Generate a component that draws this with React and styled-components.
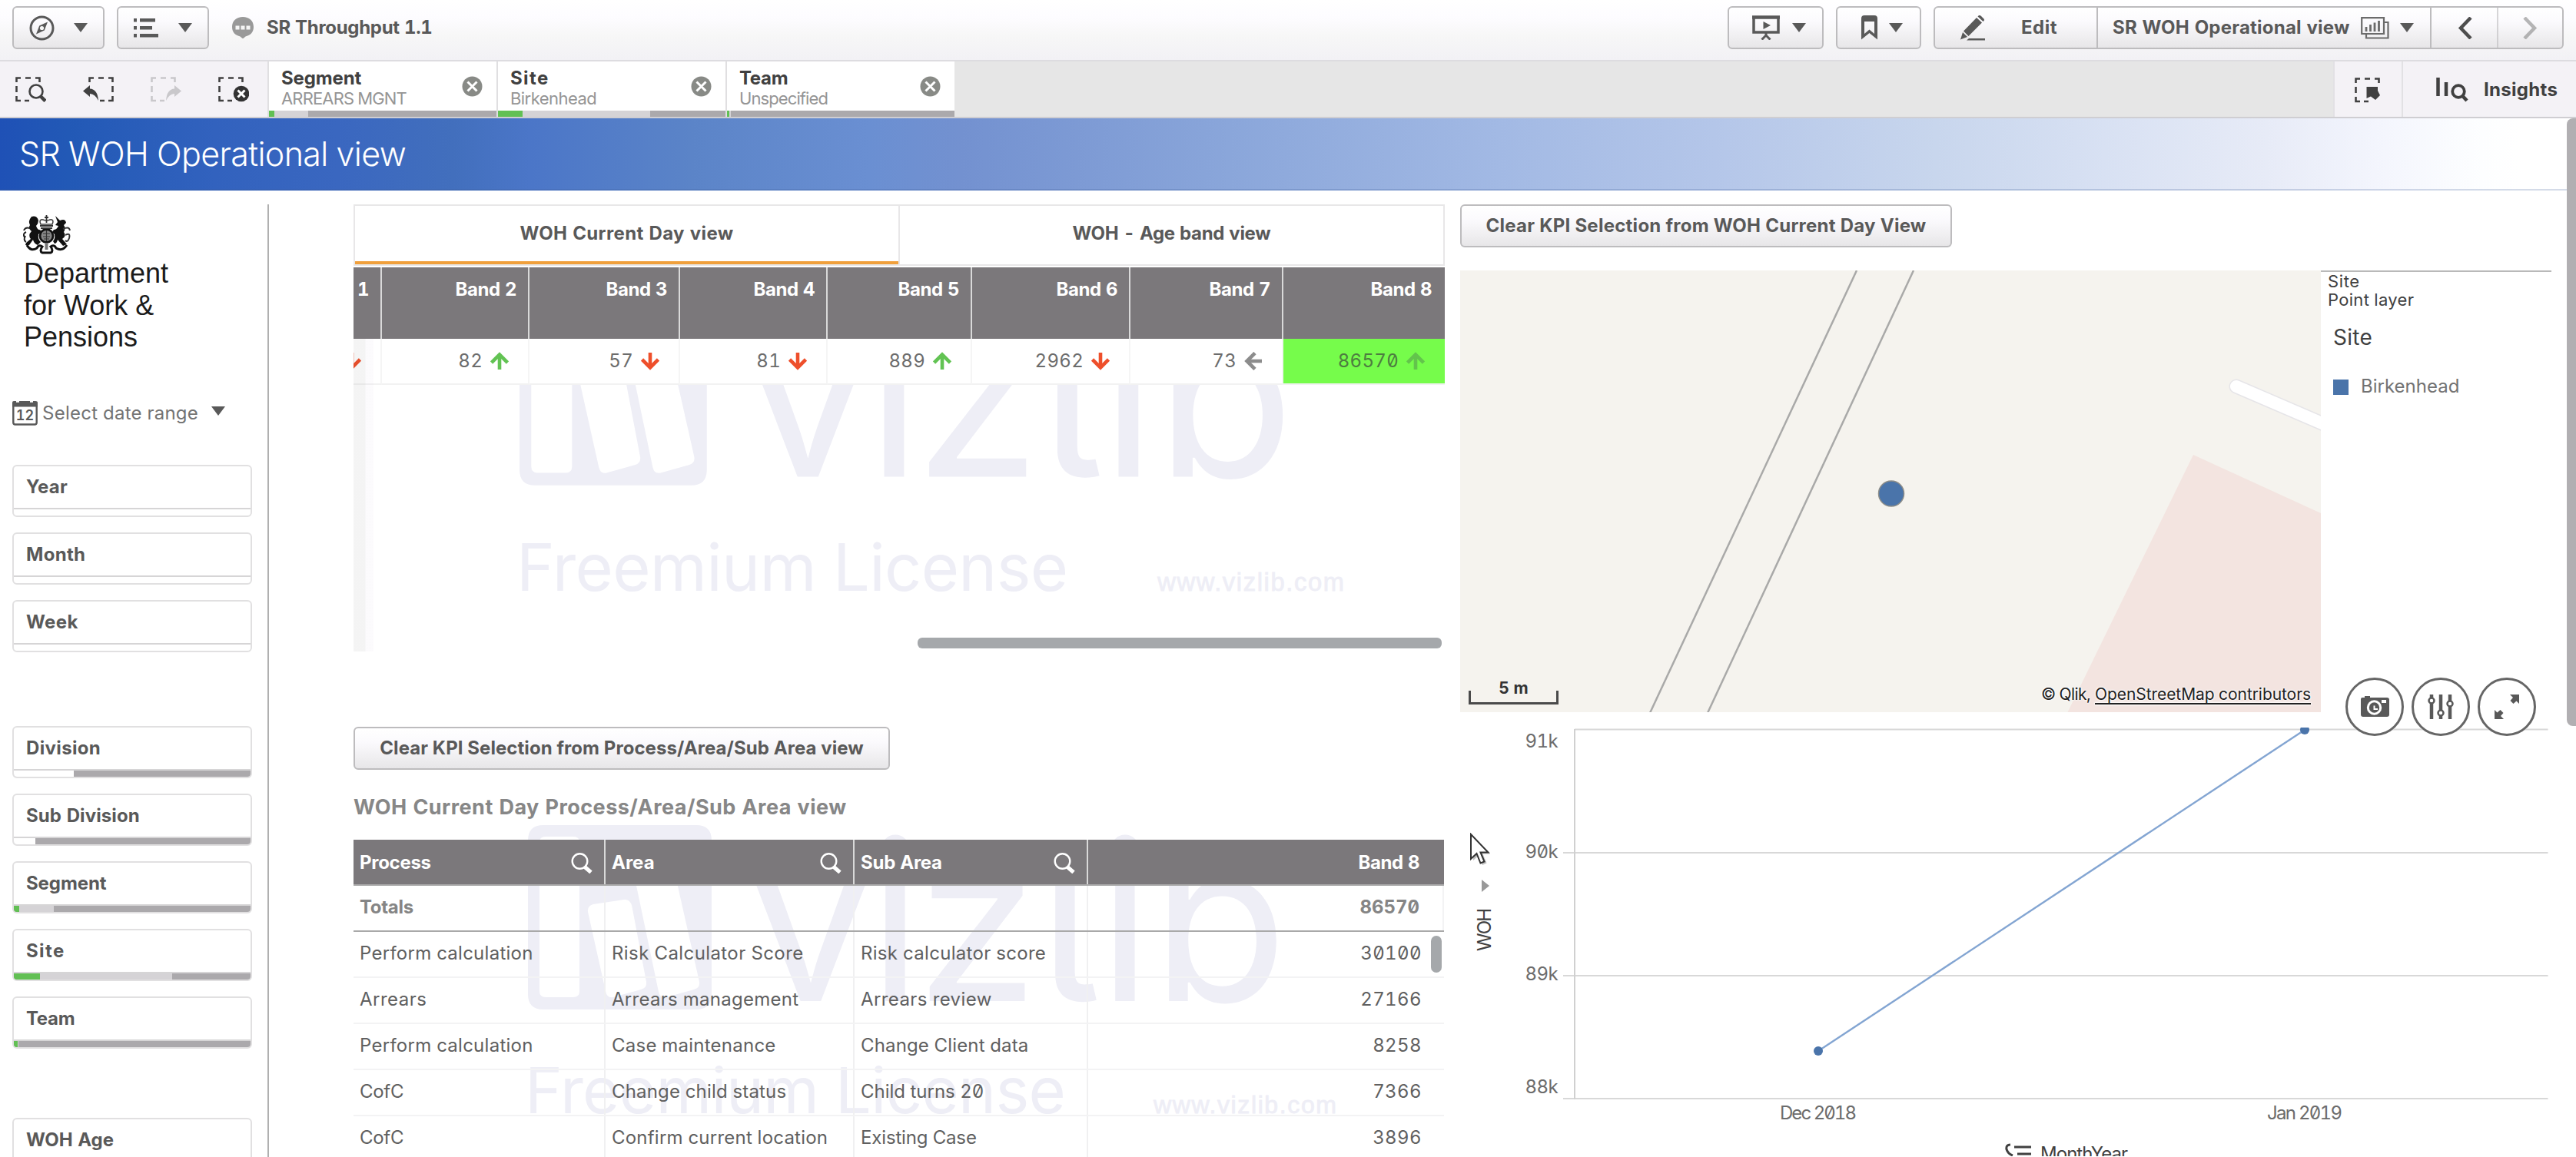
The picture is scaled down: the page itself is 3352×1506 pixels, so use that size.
import React from 'react';
import styled, { createGlobalStyle, css } from 'styled-components';

const GlobalStyle = createGlobalStyle`
  *, *::before, *::after { box-sizing: border-box; }
  html, body { margin: 0; padding: 0; background: #fff; }
  body {
    font-family: Inter, "Liberation Sans", sans-serif;
    font-size: 24px;
    line-height: 30px;
    color: #595959;
    font-feature-settings: "zero" 1, "tnum" 1;
    overflow: hidden;
  }
  svg { display: block; flex: none; }
`;

const Page = styled.div`
  width: 3352px;
  height: 1506px;
  display: flex;
  flex-direction: column;
  overflow: hidden;
  background: #fff;
`;

const Text = styled.span`
  display: block;
  white-space: nowrap;
  font-weight: ${(p) => (p.$bold ? 700 : p.$light ? 300 : 400)};
  font-size: ${(p) => p.$size || 24}px;
  letter-spacing: ${(p) => p.$ls || 0}px;
  color: ${(p) => p.$color || 'inherit'};
`;

/* ---------- top bar ---------- */

const TopBar = styled.header`
  flex: none;
  height: 80px;
  display: flex;
  align-items: flex-start;
  padding: 8px 16px 0;
  background: linear-gradient(#fff 0%, #fdfcff 30%, #f7f7f7 60%, #f2f1f5 100%);
  border-bottom: 2px solid #dddce0;
`;

const buttonFace = css`
  height: 56px;
  border: 2px solid #bdbcbe;
  border-radius: 6px;
  background: linear-gradient(#fff 0%, #fbfafd 35%, #efeef0 75%, #e7e6e8 100%);
`;

const ToolButton = styled.button`
  ${buttonFace}
  width: ${(p) => p.$w}px;
  margin: 0 ${(p) => p.$mr || 0}px 0 0;
  padding: 0 0 0 ${(p) => p.$pl || 0}px;
  display: flex;
  align-items: center;
  justify-content: center;
  gap: ${(p) => p.$gap || 0}px;
  color: #595959;
`;

const AppTitle = styled.div`
  height: 55px;
  flex: 1;
  display: flex;
  align-items: center;
  gap: 17px;
  padding-left: 30px;
`;

const ButtonGroup = styled.div`
  ${buttonFace}
  width: 820px;
  display: flex;
`;

const GroupItem = styled.div`
  width: ${(p) => p.$w}px;
  display: flex;
  align-items: center;
  padding-left: ${(p) => p.$pl || 0}px;
  gap: ${(p) => p.$gap || 0}px;
  border-left: ${(p) => (p.$first ? 'none' : '2px solid #bdbcbe')};
  opacity: ${(p) => (p.$dim ? 0.6 : 1)};
`;

/* ---------- selection bar ---------- */

const SelectionBar = styled.div`
  flex: none;
  height: 74px;
  display: flex;
  background: #e6e6e6;
  border-bottom: 2px solid #cfced2;
`;

const SelectionTools = styled.div`
  width: 348px;
  display: flex;
  align-items: center;
  padding: 1px 0 0 20px;
  gap: 48px;
  background: #f4f2f6;
`;

const Chip = styled.div`
  width: 298px;
  display: flex;
  flex-direction: column;
  background: #fff;
  border-left: 2px solid #e0dfe1;
`;

const ChipBody = styled.div`
  height: 64px;
  display: flex;
  align-items: center;
  justify-content: space-between;
  padding: 0 18px 0 16px;
`;

const ChipText = styled.div`
  display: flex;
  flex-direction: column;
  padding-top: 5px;
  & > :first-child { line-height: 27px; }
  & > :last-child { line-height: 26px; }
`;

const Bar = styled.div`
  height: ${(p) => p.$h || 8}px;
  display: flex;
  background: #aba9ac;
`;

const BarPart = styled.span`
  width: ${(p) => p.$w}px;
  background: ${(p) => p.$c};
`;

const Spacer = styled.div`
  flex: 1;
`;

const SelectionAction = styled.div`
  width: ${(p) => p.$w}px;
  display: flex;
  align-items: center;
  gap: 20px;
  padding: 2px 0 0 ${(p) => p.$pl}px;
  background: #f4f2f6;
  border-left: 2px solid #e2e1e4;
`;

/* ---------- sheet ---------- */

const Body = styled.div`
  flex: 1;
  min-height: 0;
  display: flex;
`;

const Sheet = styled.main`
  width: 3340px;
  display: flex;
  flex-direction: column;
`;

const ScrollTrack = styled.div`
  width: 12px;
`;

const ScrollThumb = styled.div`
  height: 791px;
  background: #b1afb2;
  border-radius: 8px 0 0 8px;
`;

const SheetTitle = styled.div`
  flex: none;
  height: 94px;
  display: flex;
  align-items: center;
  padding: 0 0 0 25px;
  color: #fff;
  border-bottom: 2px solid rgba(60, 90, 150, 0.22);
  background: linear-gradient(90deg, #1f51b6 0px, #2259b6 90px, #3262be 280px, #3a67c0 440px, #426fbd 590px, #4b76c8 690px, #5b84c8 900px, #6a8fd2 1130px, #7391d0 1250px, #8aa6da 1600px, #a2b9e4 1950px, #b4c6e9 2230px, #c8d6ed 2520px, #d8e1f3 2740px, #e7ebf7 2950px, #f3f5fd 3090px, #fdfeff 3230px, #ffffff 3280px);
`;

const Columns = styled.div`
  flex: 1;
  min-height: 0;
  display: flex;
  padding-top: 18px;
`;

const Sidebar = styled.aside`
  width: 350px;
  padding: 14px 0 0 16px;
  display: flex;
  flex-direction: column;
  border-right: 2px solid #b0b0b0;
  overflow: hidden;
`;

const Department = styled.div`
  font-family: "Liberation Sans", Arial, sans-serif;
  font-size: 36px;
  line-height: 41.6px;
  color: #1b1b1b;
  width: 200px;
  margin: 4px 0 0 15px;
`;

const Crest = styled.div`
  margin-left: 14px;
`;

const DateRange = styled.div`
  flex: none;
  height: 34px;
  margin: 61px 0 0;
  display: flex;
  align-items: center;
  color: #737373;
  & > span { margin: 0 17px 0 6px; }
  & > svg:last-child { margin-top: -6px; }
`;

const FilterGroup = styled.div`
  flex: none;
  display: flex;
  flex-direction: column;
  gap: 20px;
  margin-top: ${(p) => p.$mt}px;
`;

const FilterBox = styled.div`
  width: 312px;
  height: 68px;
  border: 2px solid #e1e0e1;
  border-radius: 6px;
  overflow: hidden;
  display: flex;
  flex-direction: column;
`;

const FilterLabel = styled.div`
  height: 56px;
  padding: 12px 0 0 16px;
  border-bottom: 2px solid #d6d5d6;
`;

/* ---------- center column ---------- */

const Center = styled.section`
  width: 1420px;
  margin-left: 110px;
  display: flex;
  flex-direction: column;
`;

const Tabs = styled.div`
  flex: none;
  height: 80px;
  display: flex;
  border: 2px solid #e8e7e8;
`;

const Tab = styled.div`
  width: ${(p) => p.$w}px;
  display: flex;
  align-items: center;
  justify-content: center;
  padding-bottom: ${(p) => (p.$active ? 0 : 4)}px;
  border-left: ${(p) => (p.$active ? 'none' : '2px solid #e8e7e8')};
  border-bottom: ${(p) => (p.$active ? '4px solid #f0a03c' : 'none')};
`;

const BandPanel = styled.div`
  flex: none;
  position: relative;
  height: 500px;
  margin-top: 2px;
  overflow: hidden;
`;

const BandHead = styled.div`
  position: relative;
  height: 93px;
  width: 1419px;
  display: flex;
  background: #7b787b;
`;

const BandHeadCell = styled.div`
  flex: none;
  width: ${(p) => p.$w}px;
  padding: 14px 15px 0 0;
  text-align: right;
  color: #fff;
  border-right: 2px solid #d9d9d9;
  &:last-child { border-right-color: #7b787b; }
`;

const BandRow = styled.div`
  position: relative;
  height: 60px;
  display: flex;
  background: #fff;
`;

const BandCell = styled.div`
  flex: none;
  width: ${(p) => p.$w}px;
  display: flex;
  align-items: center;
  justify-content: flex-end;
  gap: 10px;
  padding-right: ${(p) => (p.$hot ? 26 : 25)}px;
  color: ${(p) => (p.$hot ? '#4d7d40' : '#6c6c6c')};
  background: ${(p) => (p.$hot ? '#76fc4b' : 'transparent')};
  border-right: ${(p) => (p.$hot ? 'none' : '2px solid #f5f5f5')};
  border-bottom: 2px solid #f2f2f2;
`;

const WatermarkLayer = styled.div`
  position: absolute;
  left: ${(p) => p.$x}px;
  top: ${(p) => p.$y}px;
`;

const EdgeShade = styled.div`
  position: absolute;
  left: 0;
  top: 93px;
  width: 26px;
  height: 407px;
  background: linear-gradient(90deg, rgba(70, 70, 70, 0.06) 0 15px, rgba(90, 40, 140, 0.02) 16px 26px);
`;

const HorizontalThumb = styled.div`
  position: absolute;
  left: 734px;
  top: 482px;
  width: 682px;
  height: 14px;
  border-radius: 6px;
  background: #a5a8ab;
`;

const ActionButton = styled.button`
  ${buttonFace}
  flex: none;
  width: ${(p) => p.$w}px;
  margin: ${(p) => p.$mt || 0}px 0 0;
  padding: 0 0 2px;
  display: flex;
  align-items: center;
  justify-content: center;
  font-family: inherit;
  color: #595959;
`;

const ProcessPanel = styled.div`
  flex: 1;
  position: relative;
  min-height: 0;
  overflow: hidden;
  display: flex;
  flex-direction: column;
`;

const PanelTitle = styled.div`
  flex: none;
  position: relative;
  height: 91px;
  padding-top: 34px;
`;

const GridRow = styled.div`
  flex: none;
  position: relative;
  display: grid;
  grid-template-columns: 328px 324px 304px 463px;
  width: 1419px;
  height: 60px;
  color: #606060;
  border-bottom: 2px solid #f3f3f4;

  ${(p) => p.$head && css`
    color: #fff;
    background: #7b787b;
    border-bottom-color: #aaa;
  `}
  ${(p) => p.$total && css`
    color: #858585;
    border-bottom-color: #a9a9a9;
  `}
`;

const GridCell = styled.div`
  display: flex;
  align-items: center;
  justify-content: space-between;
  padding: ${(p) => (p.$head ? 2 : 0)}px 15px ${(p) => (p.$head ? 0 : 2)}px 8px;
  border-right: 2px solid ${(p) => (p.$head ? '#d9d9d9' : '#f0f0f1')};
  &:last-child {
    justify-content: flex-end;
    padding-right: ${(p) => (p.$body ? 27 : 30)}px;
    border-right-color: ${(p) => (p.$head ? '#7b787b' : p.$body ? 'transparent' : '#f3f3f4')};
  }
`;

const RowThumb = styled.div`
  position: absolute;
  left: 1402px;
  top: 216px;
  width: 14px;
  height: 48px;
  border-radius: 7px;
  background: #a5a8ab;
`;

/* ---------- right column ---------- */

const Right = styled.section`
  position: relative;
  width: 1420px;
  margin-left: 20px;
  display: flex;
  flex-direction: column;
`;

const MapRow = styled.div`
  flex: none;
  height: 575px;
  margin-top: 30px;
  display: flex;
`;

const MapBox = styled.div`
  position: relative;
  width: 1120px;
  height: 575px;
  overflow: hidden;
`;

const MapScale = styled.div`
  position: absolute;
  left: 11px;
  bottom: 10px;
  width: 117px;
  height: 18px;
  border: 3px solid #4a4a4a;
  border-top: none;
  display: flex;
  justify-content: center;
  color: #333;
  & > span { margin-top: -15px; line-height: 24px; }
`;

const Attribution = styled.div`
  position: absolute;
  right: 13px;
  bottom: 9px;
  display: flex;
  gap: 6px;
  color: #222;
  line-height: 28px;
  text-shadow: 0 0 3px #fff, 0 0 3px #fff, 0 0 2px #fff;
`;

const Underlined = styled(Text)`
  text-decoration: underline;
  text-decoration-thickness: 2px;
  text-underline-offset: 4px;
  text-decoration-skip-ink: none;
`;

const Legend = styled.div`
  width: 300px;
  border-top: 2px solid #b9b9b9;
  padding: 0 0 0 9px;
  color: #404040;
  & > span { line-height: 24px; }
`;

const LegendHeading = styled.div`
  margin: 19px 0 0 7px;
  line-height: 36px;
`;

const LegendItem = styled.div`
  display: flex;
  align-items: center;
  gap: 16px;
  margin: 31px 0 0 7px;
  color: #737373;
`;

const Swatch = styled.span`
  width: 20px;
  height: 20px;
  margin-top: 2px;
  background: #4a74aa;
`;

const RoundButtons = styled.div`
  position: absolute;
  left: 1152px;
  top: 616px;
  display: flex;
  gap: 10px;
`;

const RoundButton = styled.div`
  width: 76px;
  height: 76px;
  border-radius: 50%;
  border: 3px solid #666;
  background: #fff;
  display: flex;
  align-items: center;
  justify-content: center;
`;

const Cursor = styled.div`
  position: absolute;
  left: 12px;
  top: 818px;
`;

/* ---------- icons ---------- */

const Triangle = ({ w = 18, h = 12 }) => (
  <svg width={w} height={h} viewBox="0 0 18 12"><path d="M0 0H18L9 12Z" fill="#595959" /></svg>
);

const Compass = () => (
  <svg width="33" height="33" viewBox="0 0 33 33">
    <circle cx="16.5" cy="16.5" r="14.5" fill="none" stroke="#595959" strokeWidth="3" />
    <path d="M24 8.5L19.8 19.6L9 24.5L13.2 13.4Z" fill="#595959" />
    <circle cx="16.5" cy="16.5" r="2.6" fill="#f6f6f6" />
  </svg>
);

const ListIcon = () => (
  <svg width="33" height="25" viewBox="0 0 33 25" fill="#595959">
    <path d="M0 0h4v4.500H0zM8 0h20v4.500H8zM0 10h4v4.500H0zM8 10h16v4.500H8zM0 20h4v4.500H0zM8 20h24v4.500H8z" />
  </svg>
);

const Speech = () => (
  <svg width="28" height="28" viewBox="0 0 28 28">
    <path d="M14 0c8 0 14 5 14 13s-5 11-10.500 12.500L14 28.500L10.500 25.500C5 24 0 21 0 13S6 0 14 0z" fill="#999" />
    <path d="M4.500 11.500h5v5h-5zM11.500 11.500h5v5h-5zM18.500 11.500h5v5h-5z" fill="#f5f5f5" />
  </svg>
);

const Present = () => (
  <svg width="36" height="32" viewBox="0 0 36 32" fill="none" stroke="#595959">
    <path d="M0 2.500H36" strokeWidth="4.500" />
    <path d="M2 4V22H34V4" strokeWidth="3.500" />
    <path d="M18 23V27M12.500 31.500L18 26L23.500 31.500" strokeWidth="3" />
    <path d="M14.500 8L24 13L14.500 18Z" fill="#595959" stroke="none" />
  </svg>
);

const Bookmark = () => (
  <svg width="21" height="32" viewBox="0 0 21 32">
    <path d="M0 31.500V4Q0 0 4 0H17Q21 0 21 4V31.500L10.500 23Z M4 8V24L10.500 18.500L17 24V8Z" fill="#595959" fillRule="evenodd" />
  </svg>
);

const Pencil = () => (
  <svg width="34" height="33" viewBox="0 0 34 33" fill="#595959">
    <path d="M22 3L29 9.500L11.500 27L5 20.500ZM23.500 1.500L25 0Q26.500 -.5 28 1L31.500 4.500Q32.500 6 31.500 7L30.500 8ZM4 22L10 28L1 31.500ZM12 30H33V32.500H9Z" />
  </svg>
);

const SheetIcon = () => (
  <svg width="37" height="29" viewBox="0 0 37 29" fill="none" stroke="#6b6b6b" strokeWidth="2.200">
    <path d="M1.200 1.200H30V22H1.200ZM30 7H35.500V27.500H7V22" />
    <path d="M7 13V19M12.500 10V19M18 7.500V19M23.500 5V19" strokeWidth="2.800" />
  </svg>
);

const Chevron = ({ flip }) => (
  <svg width="19" height="29" viewBox="0 0 19 29" fill="none" stroke={flip ? '#888' : '#4d4d4d'} strokeWidth="4.500">
    <path d={flip ? 'M2 1L15 14.500L2 28' : 'M17 1L4 14.500L17 28'} />
  </svg>
);

const corner = 'M1.500 7V1.500H7M13 1.500H20M26 1.500H31.500V7M1.500 12V20M1.500 25V31H7M12 31H18';

const SelectSearch = () => (
  <svg width="40" height="33" viewBox="0 0 40 33" fill="none" stroke="#404040" strokeWidth="2.600">
    <path d={corner} />
    <circle cx="27" cy="19" r="8.500" />
    <path d="M32.500 25L39 31.500" strokeWidth="4.500" />
  </svg>
);

const StepBack = () => (
  <svg width="40" height="33" viewBox="0 0 40 33" fill="none" stroke="#404040" strokeWidth="2.600">
    <path d="M8.500 7V1.500H14M20 1.500H27M33 1.500H38.500V7M38.500 12V20M38.500 25V31H33M28 31H22" />
    <path d="M0 18.500L9 11V15.500Q19 16 20 31Q16 22.500 9 22V26Z" fill="#404040" stroke="none" />
  </svg>
);

const StepForward = () => (
  <svg width="40" height="33" viewBox="0 0 40 33" fill="none" stroke="#c9c8cb" strokeWidth="2.600">
    <path d="M31.500 7V1.500H26M20 1.500H13M7 1.500H1.500V7M1.500 12V20M1.500 25V31H7M12 31H18" />
    <path d="M40 18.500L31 11V15.500Q21 16 20 31Q24 22.500 31 22V26Z" fill="#c9c8cb" stroke="none" />
  </svg>
);

const ClearAll = () => (
  <svg width="40" height="33" viewBox="0 0 40 33" fill="none" stroke="#404040" strokeWidth="2.600">
    <path d={corner} />
    <circle cx="30" cy="22" r="10.300" fill="#333" stroke="none" />
    <path d="M25.500 17.500L34.500 26.500M34.500 17.500L25.500 26.500" stroke="#fff" strokeWidth="3" />
  </svg>
);

const SelectTool = () => (
  <svg width="34" height="33" viewBox="0 0 34 33" fill="none" stroke="#404040" strokeWidth="2.600">
    <path d={corner} />
    <path d="M15.500 12H30V17L33 23L27 29L21 24.500L15.500 27Z" fill="#404040" stroke="none" />
  </svg>
);

const InsightsIcon = () => (
  <svg width="42" height="32" viewBox="0 0 42 32" fill="none" stroke="#404040" strokeWidth="4.500">
    <path d="M2.500 0V24M13 6V24" />
    <circle cx="29" cy="18" r="7.800" strokeWidth="3.800" />
    <path d="M34 23.500L40 30" />
  </svg>
);

const ClearIcon = () => (
  <svg width="27" height="27" viewBox="0 0 27 27">
    <circle cx="13.500" cy="13.500" r="13" fill="#888a86" />
    <path d="M7.500 7.500L19.500 19.500M19.500 7.500L7.500 19.500" stroke="#fff" strokeWidth="3" />
  </svg>
);

const Calendar = () => (
  <svg width="33" height="33" viewBox="0 0 33 33">
    <rect x="1.300" y="4" width="30.400" height="27.500" rx="2.500" fill="#fff" stroke="#595959" strokeWidth="2.400" />
    <path d="M0 8.500V3Q0 1 2 1H5V4H9V1H23V4H27V1H30Q33 1 33 3V8.500Z" fill="#595959" />
    <text x="16.500" y="26" textAnchor="middle" fontSize="18" fontWeight="600" fill="#595959" fontFamily="Inter, sans-serif">12</text>
  </svg>
);

const CrestIcon = () => (
  <svg width="62" height="51" viewBox="0 0 62 51" fill="#111">
    <circle cx="30.500" cy="27" r="8.500" fill="#888" stroke="#111" strokeWidth="2.800" />
    <path d="M26 24h9M26 28h9M30.500 20v14M27 31h7" stroke="#333" strokeWidth="1.200" />
    <path d="M23 12Q20 5 26 6Q30.500 8 35 6Q41 5 38 12Z" fill="none" stroke="#444" strokeWidth="1.600" />
    <path d="M30.500 0V10M28 3H33M22 14H39M23 17H38" stroke="#333" strokeWidth="1.800" />
    <path d="M11 2Q18 0 20 7Q20 11 17 14Q19 20 22 19L24 22L20 25Q19 32 23 35L19 39Q14 37 13 32L8 39H3L4 36L10 31Q6 26 11 21Q6 17 9 13Q6 8 11 2Z" />
    <path d="M2 29Q-1 24 4 22M1 20Q3 15 9 17M4 35Q0 33 3 27" fill="none" stroke="#222" strokeWidth="2" />
    <path d="M42 1L48 7Q55 4 56 10L53 13Q56 17 53 22Q57 27 51 31L57 38L52 40L45 32Q44 37 41 37L39 34Q42 31 41 25L38 22L40 19Q44 19 46 14L42 13L45 9Z" />
    <path d="M52 18Q60 14 61 20M55 26Q62 22 60 30Q58 36 55 33" fill="none" stroke="#333" strokeWidth="2" />
    <path d="M5 39Q10 48 18 43Q20 38 25 41Q21 47 25 49H36Q40 47 36 41Q41 38 43 43Q51 48 57 39" fill="none" stroke="#111" strokeWidth="3" />
    <path d="M30.500 36V45" stroke="#777" strokeWidth="4" />
  </svg>
);

const SearchIcon = () => (
  <svg width="28" height="28" viewBox="0 0 28 28" fill="none" stroke="#fff">
    <circle cx="11.500" cy="12" r="9.800" strokeWidth="2.400" />
    <path d="M18 19.500L26 26.500" strokeWidth="5" />
  </svg>
);

const arrowColors = { up: '#62c353', down: '#ee4f2b', left: '#8c8c8c', hot: '#63c44c' };
const arrowTurn = { up: 0, hot: 0, down: 180, left: 270 };

const Arrow = ({ kind }) => (
  <svg width="24" height="24" viewBox="0 0 24 24" fill="none" stroke={arrowColors[kind]} strokeWidth="4.600">
    <g transform={`rotate(${arrowTurn[kind]} 12 12)`}>
      <path d="M12 23V3" />
      <path d="M1.500 14L12 3.500L22.500 14" />
    </g>
  </svg>
);

const CameraIcon = () => (
  <svg width="37" height="28" viewBox="0 0 37 28">
    <path d="M0 4Q0 2 2 2H5V0H12V2H34Q37 2 37 5V24Q37 27 34 27H3Q0 27 0 24Z" fill="#595959" />
    <circle cx="17.500" cy="15" r="8.200" fill="none" stroke="#fff" strokeWidth="3" />
    <path d="M17.500 12.500V17H22" fill="none" stroke="#fff" strokeWidth="2" />
    <path d="M27 5H33V9H27Z" fill="#fff" />
  </svg>
);

const SlidersIcon = () => (
  <svg width="34" height="34" viewBox="0 0 34 34" fill="#fff" stroke="#595959">
    <path d="M5 1V33M17 1V33M29 1V33" strokeWidth="4.500" />
    <circle cx="5" cy="9" r="3.500" strokeWidth="2.500" />
    <circle cx="17" cy="25" r="3.500" strokeWidth="2.500" />
    <circle cx="29" cy="13" r="3.500" strokeWidth="2.500" />
  </svg>
);

const ExpandIcon = () => (
  <svg width="34" height="34" viewBox="0 0 34 34" fill="#595959">
    <path d="M21 1H33V13L29.500 9.500L25.500 13L21.500 9L25 5ZM1 21L4.500 24.500L8.500 21L12.500 25L9 29L13 33H1Z" />
  </svg>
);

const CursorIcon = () => (
  <svg width="32" height="46" viewBox="0 0 32 46">
    <path d="M5 5V36L12 29.500L17 42L22.500 39.500L17.500 27.500H27Z" fill="#000" opacity="0.25" />
    <path d="M2 2V34L9.500 27L14.500 39.500L19.500 37.500L14.500 25.500H24.500Z" fill="#fff" stroke="#333" strokeWidth="2" />
  </svg>
);

const WordmarkText = styled.text`
  font-family: Inter, sans-serif;
  font-size: 288px;
  font-feature-settings: "cv05" 1;
`;

const Watermark = ({ scale = 1 }) => (
  <svg width={1060 * scale} height={400 * scale} viewBox="0 0 1060 400" fill="#eeeef6">
    <path
      fillRule="evenodd"
      d="M20 0H219Q239 0 239 20V220Q239 240 219 240H20Q0 240 0 220V20Q0 0 20 0Z
         M15 22V216Q15 224 23 224H59Q67 224 67 216V22Q67 15 59 15H23Q15 15 15 22Z
         M85 103Q77 105 78 113L101 216Q103 226 111 224L147 214Q155 212 154 204L135 104Q132 96 125 97Z
         M131 31L170 217Q172 226 180 224L216 214Q224 212 223 204L182 22Z"
    />
    <WordmarkText x="287 443 505 664 742 812" y="229">vizlib</WordmarkText>
    <text x="-4" y="375" fontFamily="Inter, sans-serif" fontSize="83" textLength="704" lengthAdjust="spacing">Freemium License</text>
    <text x="814" y="375" fontFamily="Liberation Sans, sans-serif" fontSize="32" textLength="238" stroke="#eeeef6" strokeWidth="0.800">www.vizlib.com</text>
  </svg>
);

const MapDrawing = () => (
  <svg width="1120" height="576" viewBox="0 0 1120 576">
    <rect width="1120" height="576" fill="#f5f3ee" />
    <path d="M954 240L1120 316V576H790Z" fill="#f3e4e0" />
    <path d="M1010 151L1140 207" stroke="#e6e5e8" strokeWidth="19" strokeLinecap="round" />
    <path d="M1010 151L1140 207" stroke="#fff" strokeWidth="16" strokeLinecap="round" />
    <path d="M516 0L247 576M590 0L322 576" stroke="#a9a9a8" strokeWidth="2.500" />
    <circle cx="561" cy="290.500" r="16.500" fill="#4a74aa" stroke="#8d8d88" strokeWidth="1.500" />
  </svg>
);

const gridTicks = [
  { label: '91k', y: 22.5, text: 46 },
  { label: '90k', y: 183, text: 190 },
  { label: '89k', y: 343, text: 349 },
  { label: '88k', y: 503, text: 496 },
];

const Chart = () => (
  <svg width="1420" height="578" viewBox="0 0 1420 578" fontFamily="Inter, sans-serif" fontSize="24" fill="#6c6c6c">
    <defs>
      <clipPath id="plot"><rect x="149" y="20" width="1270" height="500" /></clipPath>
    </defs>
    {gridTicks.map((t, i) => (
      <g key={t.label}>
        <path d={`M${i === 0 ? 149 : 134} ${t.y}H1415.500`} stroke="#d8d8d8" strokeWidth="2" />
        <text x="127" y={t.text} textAnchor="end" letterSpacing="-0.6">{t.label}</text>
      </g>
    ))}
    <path d="M149 22V504" stroke="#d0d0d0" strokeWidth="2" />
    <g clipPath="url(#plot)">
      <path d="M466 441L1099 23" stroke="#83a5d2" strokeWidth="2.400" />
      <circle cx="466" cy="441" r="6" fill="#4a74aa" />
      <circle cx="1099" cy="23" r="6" fill="#4a74aa" />
    </g>
    <text x="466" y="530" textAnchor="middle" textLength="100">Dec 2018</text>
    <text x="1099" y="530" textAnchor="middle" textLength="98">Jan 2019</text>
    <path d="M28 218L38 226L28 234Z" fill="#999" />
    <text transform="translate(40 311) rotate(-90)" textLength="56" fill="#404040">WOH</text>
    <g fill="none" stroke="#404040" strokeWidth="3">
      <path d="M716 563Q710 563 711 569Q713 575 719 577M721 566H743M725 575H743" />
    </g>
    <text x="755" y="583" textLength="114" fill="#404040">MonthYear</text>
  </svg>
);

/* ---------- data ---------- */

const chips = [
  { name: 'Segment', nls: -0.15, value: 'ARREARS MGNT', vls: -0.85, parts: [[7, '#62c054'], [44, '#d5d3d6']] },
  { name: 'Site', nls: 1.4, value: 'Birkenhead', vls: -0.55, parts: [[32, '#62c054'], [166, '#d5d3d6']] },
  { name: 'Team', nls: -0.3, value: 'Unspecified', vls: -0.9, parts: [[3, '#62c054'], [2, '#d5d3d6']] },
];

const dateFilters = [['Year', 0.2], ['Month', 0.3], ['Week', 0.4]];

const fieldFilters = [
  { name: 'Division', ls: 0.35, parts: [[78, '#fff']] },
  { name: 'Sub Division', ls: 0.1, parts: [[28, '#fff']] },
  { name: 'Segment', ls: -0.1, parts: [[7, '#62c054'], [45, '#d5d3d6']] },
  { name: 'Site', ls: 1.4, parts: [[34, '#62c054'], [172, '#d5d3d6']] },
  { name: 'Team', ls: -0.3, parts: [[5, '#62c054'], [1, '#d5d3d6']] },
];

const bands = [
  { label: '1', w: 37, value: '', kind: 'down' },
  { label: 'Band 2', w: 192, value: '82', kind: 'up' },
  { label: 'Band 3', w: 196, value: '57', kind: 'down' },
  { label: 'Band 4', w: 192, value: '81', kind: 'down' },
  { label: 'Band 5', w: 188, value: '889', kind: 'up' },
  { label: 'Band 6', w: 206, value: '2962', kind: 'down' },
  { label: 'Band 7', w: 199, value: '73', kind: 'left' },
  { label: 'Band 8', w: 210, value: '86570', kind: 'hot' },
];

const rows = [
  [['Perform calculation', 0.26], ['Risk Calculator Score', 0.4], ['Risk calculator score', 0.3], '30100'],
  [['Arrears', 0.5], ['Arrears management', 0.28], ['Arrears review', 0.4], '27166'],
  [['Perform calculation', 0.26], ['Case maintenance', 0.24], ['Change Client data', 0.15], '8258'],
  [['CofC', -0.3], ['Change child status', 0.17], ['Child turns 20', 0], '7366'],
  [['CofC', -0.3], ['Confirm current location', 0.22], ['Existing Case', -0.15], '3896'],
];

export default function App() {
  return (
    <Page>
      <GlobalStyle />
      <TopBar>
        <ToolButton $w={120} $mr={16} $gap={25}><Compass /><Triangle /></ToolButton>
        <ToolButton $w={120} $gap={25}><ListIcon /><Triangle /></ToolButton>
        <AppTitle><Speech /><Text $bold $ls={-0.3}>SR Throughput 1.1</Text></AppTitle>
        <ToolButton $w={125} $mr={16} $pl={9} $gap={16}><Present /><Triangle /></ToolButton>
        <ToolButton $w={111} $mr={16} $pl={9} $gap={15}><Bookmark /><Triangle /></ToolButton>
        <ButtonGroup>
          <GroupItem $first $w={210} $pl={32} $gap={46}><Pencil /><Text $bold $ls={0.5}>Edit</Text></GroupItem>
          <GroupItem $w={434} $pl={19} $gap={14}>
            <Text $bold $ls={0.22}>SR WOH Operational view</Text><SheetIcon /><Triangle />
          </GroupItem>
          <GroupItem $w={87} $pl={34}><Chevron /></GroupItem>
          <GroupItem $w={85} $pl={32} $dim><Chevron flip /></GroupItem>
        </ButtonGroup>
      </TopBar>

      <SelectionBar>
        <SelectionTools><SelectSearch /><StepBack /><StepForward /><ClearAll /></SelectionTools>
        {chips.map((c) => (
          <Chip key={c.name}>
            <ChipBody>
              <ChipText>
                <Text $bold $ls={c.nls} $color="#404040">{c.name}</Text>
                <Text $size={22} $ls={c.vls} $color="#959595">{c.value}</Text>
              </ChipText>
              <ClearIcon />
            </ChipBody>
            <Bar>{c.parts.map(([w, color], i) => <BarPart key={i} $w={w} $c={color} />)}</Bar>
          </Chip>
        ))}
        <Spacer />
        <SelectionAction $w={89} $pl={26}><SelectTool /></SelectionAction>
        <SelectionAction $w={227} $pl={43}>
          <InsightsIcon /><Text $bold $ls={0.3} $color="#404040">Insights</Text>
        </SelectionAction>
      </SelectionBar>

      <Body>
        <Sheet>
          <SheetTitle><Text $light $size={43} $ls={-0.65}>SR WOH Operational view</Text></SheetTitle>
          <Columns>
            <Sidebar>
              <Crest><CrestIcon /></Crest>
              <Department>Department for Work &amp; Pensions</Department>
              <DateRange><Calendar /><Text $ls={0.25}>Select date range</Text><Triangle /></DateRange>
              <FilterGroup $mt={50}>
                {dateFilters.map(([name, ls]) => (
                  <FilterBox key={name}><FilterLabel><Text $bold $ls={ls}>{name}</Text></FilterLabel></FilterBox>
                ))}
              </FilterGroup>
              <FilterGroup $mt={96}>
                {fieldFilters.map((f) => (
                  <FilterBox key={f.name}>
                    <FilterLabel><Text $bold $ls={f.ls}>{f.name}</Text></FilterLabel>
                    <Bar>{f.parts.map(([w, color], i) => <BarPart key={i} $w={w} $c={color} />)}</Bar>
                  </FilterBox>
                ))}
              </FilterGroup>
              <FilterGroup $mt={90}>
                <FilterBox><FilterLabel><Text $bold>WOH Age</Text></FilterLabel></FilterBox>
              </FilterGroup>
            </Sidebar>

            <Center>
              <Tabs>
                <Tab $active $w={707}><Text $bold $ls={0.38}>WOH Current Day view</Text></Tab>
                <Tab $w={709}><Text $bold $ls={-0.3}>WOH - Age band view</Text></Tab>
              </Tabs>
              <BandPanel>
                <WatermarkLayer $x={216} $y={39}><Watermark scale={1.02} /></WatermarkLayer>
                <BandHead>
                  {bands.map((b) => (
                    <BandHeadCell key={b.label} $w={b.w}><Text $bold $ls={-0.4}>{b.label}</Text></BandHeadCell>
                  ))}
                </BandHead>
                <BandRow>
                  {bands.map((b) => (
                    <BandCell key={b.label} $w={b.w} $hot={b.kind === 'hot'}>
                      {b.value && <Text $ls={0.3}>{b.value}</Text>}<Arrow kind={b.kind} />
                    </BandCell>
                  ))}
                </BandRow>
                <EdgeShade />
                <HorizontalThumb />
              </BandPanel>
              <ActionButton $w={698} $mt={98}>
                <Text $bold $ls={0.06}>Clear KPI Selection from Process/Area/Sub Area view</Text>
              </ActionButton>
              <ProcessPanel>
                <WatermarkLayer $x={227} $y={72}><Watermark /></WatermarkLayer>
                <PanelTitle>
                  <Text $bold $size={27} $ls={0.46} $color="#878787">WOH Current Day Process/Area/Sub Area view</Text>
                </PanelTitle>
                <GridRow $head>
                  <GridCell $head><Text $bold $ls={-0.3}>Process</Text><SearchIcon /></GridCell>
                  <GridCell $head><Text $bold>Area</Text><SearchIcon /></GridCell>
                  <GridCell $head><Text $bold $ls={-0.25}>Sub Area</Text><SearchIcon /></GridCell>
                  <GridCell $head><Text $bold $ls={-0.4}>Band 8</Text></GridCell>
                </GridRow>
                <GridRow $total>
                  <GridCell><Text $bold $ls={-0.3}>Totals</Text></GridCell>
                  <GridCell />
                  <GridCell />
                  <GridCell><Text $bold $ls={0}>86570</Text></GridCell>
                </GridRow>
                {rows.map(([process, area, sub, count], i) => (
                  <GridRow key={i}>
                    <GridCell><Text $ls={process[1]}>{process[0]}</Text></GridCell>
                    <GridCell><Text $ls={area[1]}>{area[0]}</Text></GridCell>
                    <GridCell><Text $ls={sub[1]}>{sub[0]}</Text></GridCell>
                    <GridCell $body><Text $ls={0.4}>{count}</Text></GridCell>
                  </GridRow>
                ))}
                <RowThumb />
              </ProcessPanel>
            </Center>

            <Right>
              <ActionButton $w={640}>
                <Text $bold $ls={0.25}>Clear KPI Selection from WOH Current Day View</Text>
              </ActionButton>
              <MapRow>
                <MapBox>
                  <MapDrawing />
                  <MapScale><Text $size={21} $bold>5 m</Text></MapScale>
                  <Attribution>
                    <Text $size={21} $ls={-0.6}>© Qlik,</Text>
                    <Underlined $size={21} $ls={-0.07}>OpenStreetMap contributors</Underlined>
                  </Attribution>
                </MapBox>
                <Legend>
                  <Text $size={22} $ls={0.6}>Site</Text>
                  <Text $size={22} $ls={0.3}>Point layer</Text>
                  <LegendHeading><Text $size={28} $ls={0.3}>Site</Text></LegendHeading>
                  <LegendItem><Swatch /><Text $ls={0}>Birkenhead</Text></LegendItem>
                </Legend>
              </MapRow>
              <Chart />
              <RoundButtons>
                <RoundButton><CameraIcon /></RoundButton>
                <RoundButton><SlidersIcon /></RoundButton>
                <RoundButton><ExpandIcon /></RoundButton>
              </RoundButtons>
              <Cursor><CursorIcon /></Cursor>
            </Right>
          </Columns>
        </Sheet>
        <ScrollTrack><ScrollThumb /></ScrollTrack>
      </Body>
    </Page>
  );
}
